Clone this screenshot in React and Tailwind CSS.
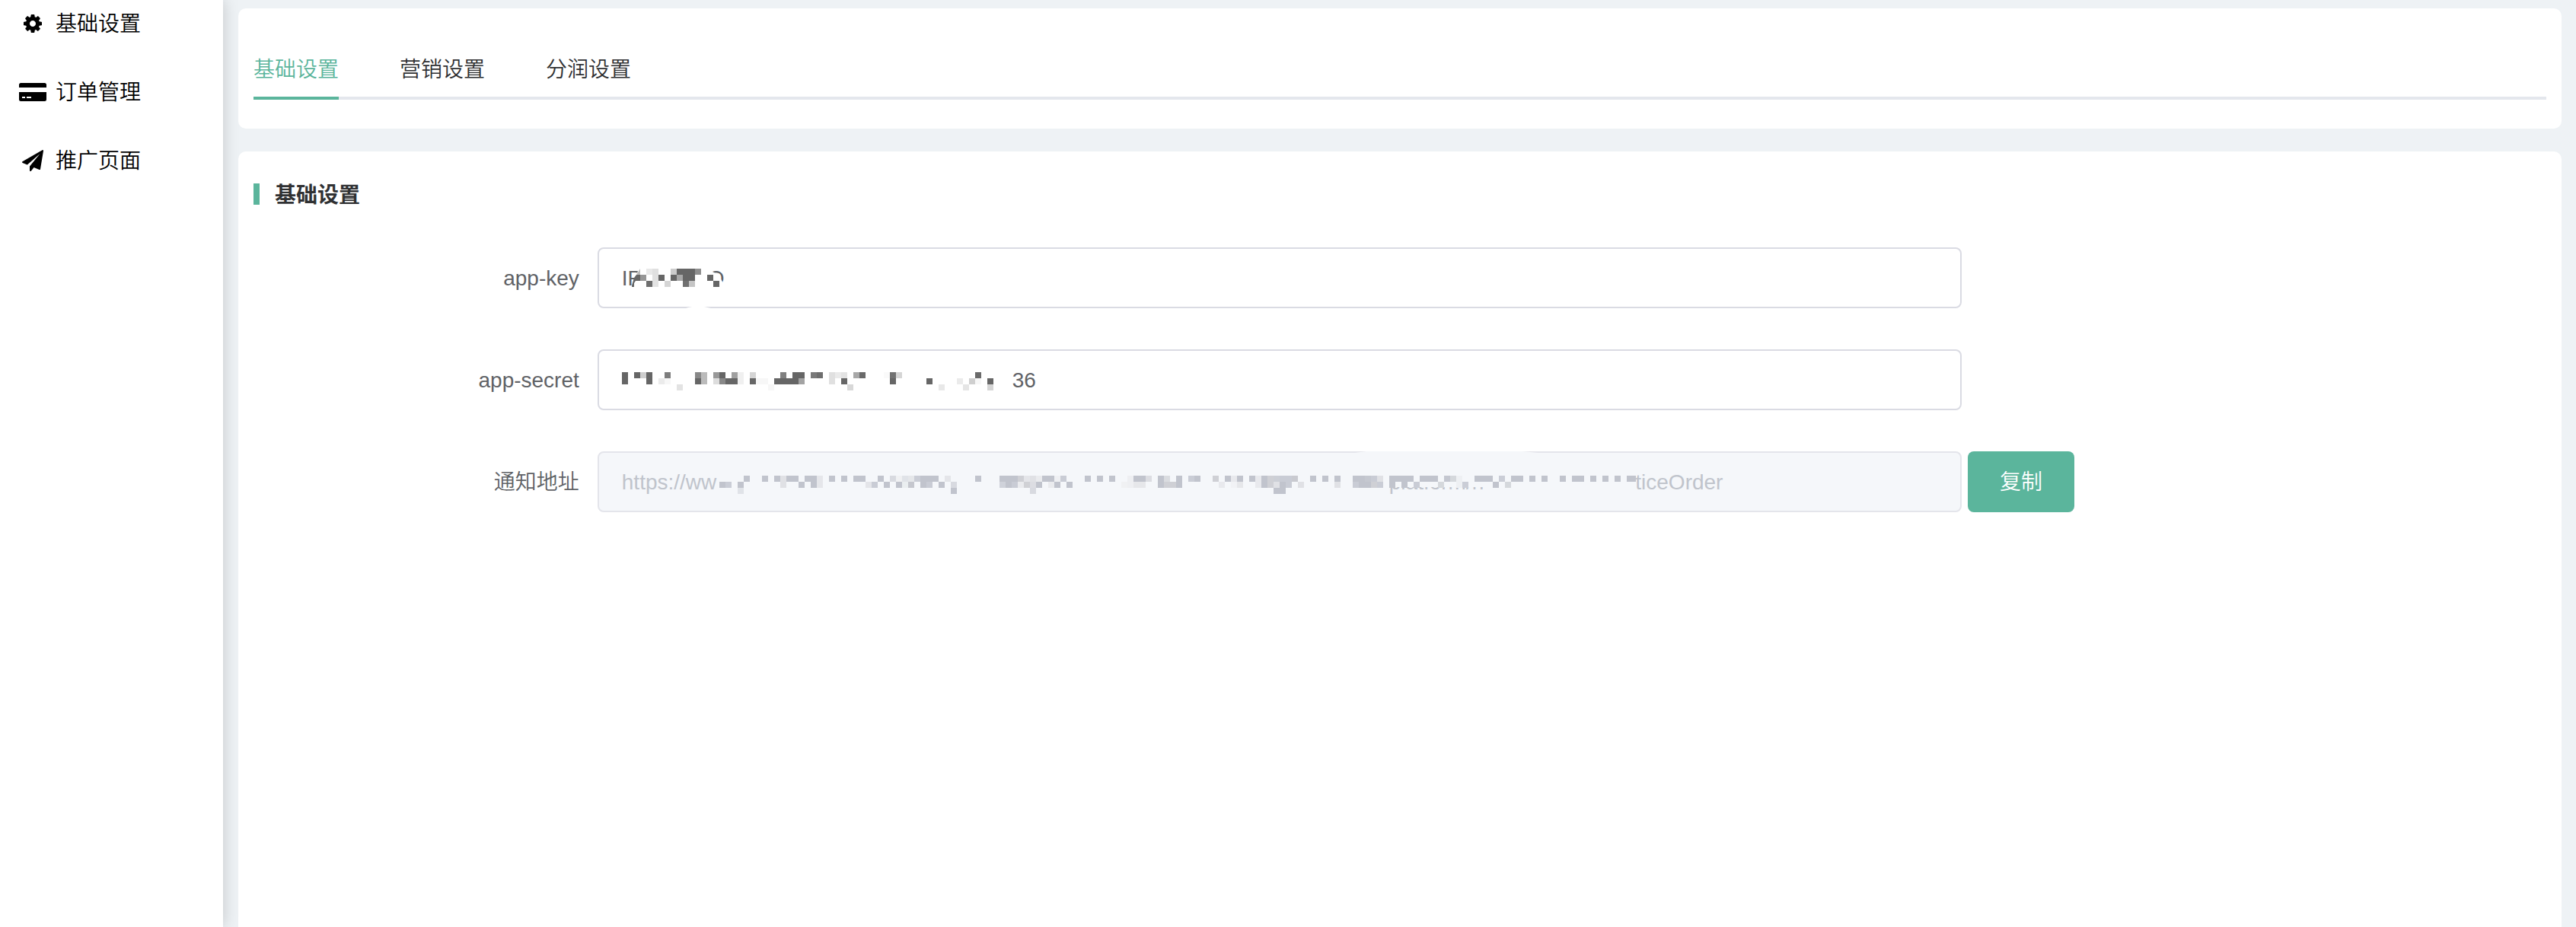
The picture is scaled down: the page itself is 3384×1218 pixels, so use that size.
import { useState } from "react";

const CELL = 8;

const KEY_ROWS = [
  "4:e8e8e8 5:e0e0e0 8:cccccc 9:666666 10:666666 11:666666 12:8f8f8f",
  "3:969696 5:e0e0e0 6:666666 8:666666 9:a8a8a8 10:666666 11:666666 14:666666",
  "4:6e6e6e 5:e3e3e3 7:d5d5d5 10:707070 11:c5c5c5 15:666666",
];

const SECRET_ROWS = [
  "0:666666 2:666666 3:cecece 4:666666 7:7d7d7d 12:888888 13:bbbbbb 15:999999 16:666666 18:a0a0a0 19:f0f0f0 21:d5d5d5 26:808080 28:666666 29:666666 31:7a7a7a 32:6e6e6e 34:e0e0e0 35:eaeaea 36:e3e3e3 38:a8a8a8 39:6a6a6a 43:fafafa 44:727272 45:d5d5d5 58:6a6a6a",
  "0:666666 4:666666 6:ebebeb 7:f7f7f7 12:666666 13:bbbbbb 15:dddddd 16:888888 17:666666 18:666666 19:f0f0f0 21:666666 22:f7f7f7 23:f7f7f7 25:666666 26:666666 27:666666 28:666666 29:a3a3a3 34:e0e0e0 36:666666 44:666666 50:666666 55:ebebeb 57:cfcfcf 58:f7f7f7 60:666666",
  "9:e3e3e3 24:f7f7f7 37:d8d8d8 52:e8e8e8 56:e5e5e5 60:d5d5d5",
];

const URL_ROWS = [
  "4:c1c4cd 7:c1c4cd 9:c1c4cd 10:e0e1e5 11:c1c4cd 12:c1c4cd 14:c1c4cd 15:c1c4cd 16:e5e6ea 18:c1c4cd 20:c1c4cd 22:c1c4cd 23:c1c4cd 26:c1c4cd 28:d8dae0 29:f0f1f3 30:e0e3e8 31:e5e7ea 32:cacdd6 33:c1c4cd 34:c1c4cd 35:c1c4cd 37:e4e5e9 42:c1c4cd 46:c1c4cd 47:c1c4cd 48:c1c4cd 49:cfd0d5 50:e4e5e9 51:e0e1e5 52:eaebee 53:c1c4cd 54:c1c4cd 55:eff0f3 56:c9ccd5 60:c1c4cd 62:c1c4cd 64:c1c4cd 67:eeeff2 68:c1c4cd 69:c1c4cd 70:dcdde2 72:c1c4cd 73:dadce0 75:c1c4cd 77:cacdd6 78:c1c4cd 81:cfd0d5 83:c1c4cd 84:e8e9ed 85:c1c4cd 87:c1c4cd 88:e8e9ed 89:c1c4cd 90:cfd0d5 91:cccfd6 92:c9ccd5 93:c9ccd5 94:c9cad0 97:c1c4cd 99:c1c4cd 101:c1c4cd 104:c1c4cd 105:c1c4cd 106:c5c8d0 107:c9ccd5 108:e0e1e5 110:c1c4cd 111:c1c4cd 112:c1c4cd 113:c1c4cd 115:c1c4cd 116:c1c4cd 117:c1c4cd 119:c4c7d0 120:d5d8dc 121:eef0f3 124:c1c4cd 125:c1c4cd 126:c1c4cd 128:cacdd6 130:c1c4cd 131:c1c4cd 133:c1c4cd 135:c1c4cd 138:c1c4cd 140:c1c4cd 141:c1c4cd 143:c1c4cd 145:c1c4cd 147:c1c4cd 149:c1c4cd",
  "0:c1c4cd 1:cacdd6 3:c1c4cd 10:e0e1e5 13:c1c4cd 15:c1c4cd 16:e5e6ea 24:e4e5e9 25:c9ccd5 27:c1c4cd 29:c1c4cd 30:eaeef0 31:c5c7ce 33:c1c4cd 34:c9ccd5 36:c1c4cd 38:d8dae0 46:cfd2da 47:c1c4cd 48:c9ccd5 49:eaebee 50:d0d1d5 51:dcdde2 52:c1c4cd 54:eaebee 55:c1c4cd 57:c1c4cd 66:f0f1f3 67:eeeff2 68:e6e7ea 69:e6e7ea 72:c1c4cd 73:cfd0d5 74:cfd0d5 75:c1c4cd 82:e8e9ed 84:f1f2f5 85:e6e7ea 88:e8e9ed 89:c1c4cd 90:cfd0d5 91:e0e1e5 92:c1c4cd 93:c9ccd5 95:e0e1e5 101:e0e1e5 104:c9ccd5 105:c1c4cd 106:c1c4cd 107:cfd0d5 108:cacdd6 110:c1c4cd 112:c1c4cd 114:c9ccd5 118:d5d8dc 121:eef0f3 122:cacdd6 127:c1c4cd 129:d5d8dc",
  "3:e0e3e8 38:c1c4cd 51:d8dae0 91:c1c4cd 92:c1c4cd",
];

function Mosaic({ rows }) {
  return rows.flatMap((row, y) =>
    row.split(" ").map((cell) => {
      const [x, color] = cell.split(":");
      return (
        <rect key={y + "-" + x} x={Number(x) * CELL} y={y * CELL} width={CELL} height={CELL} fill={"#" + color} />
      );
    })
  );
}

function CogIcon() {
  return (
    <svg viewBox="0 0 1792 1792" className="size-7" fill="currentColor" aria-hidden="true">
      <path d="M1152 896q0-106-75-181t-181-75-181 75-75 181 75 181 181 75 181-75 75-181zm512-109v222q0 12-8 23t-20 13l-185 28q-19 54-39 91 35 50 107 138 10 12 10 25t-9 23q-27 37-99 108t-94 71q-12 0-26-9l-138-108q-44 23-91 38-16 136-29 186-7 28-36 28h-222q-14 0-24.5-8.5t-11.5-21.5l-28-184q-49-16-90-37l-141 107q-10 9-25 9-14 0-25-11-126-114-165-168-7-10-7-23 0-12 8-23 15-21 51-66.5t54-70.5q-27-50-41-99l-183-27q-13-2-21-12.5t-8-23.5v-222q0-12 8-23t19-13l186-28q14-46 39-92-40-57-107-138-10-12-10-24 0-10 9-23 26-36 98.5-107.5t94.5-71.5q13 0 26 10l138 107q44-23 91-38 16-136 29-186 7-28 36-28h222q14 0 24.5 8.5t11.5 21.5l28 184q49 16 90 37l142-107q9-9 24-9 13 0 25 10 129 119 165 170 7 8 7 22 0 12-8 23-15 21-51 66.5t-54 70.5q26 50 41 98l183 28q13 2 21 12.5t8 23.5z" />
    </svg>
  );
}

function CardIcon() {
  return (
    <svg viewBox="0 0 36 24" className="h-6 w-9" aria-hidden="true">
      <path fill="currentColor" d="M2.5 0h31A2.5 2.5 0 0 1 36 2.5V6H0V2.5A2.5 2.5 0 0 1 2.5 0z" />
      <path
        fill="currentColor"
        fillRule="evenodd"
        d="M0 12h36v9.5a2.5 2.5 0 0 1-2.5 2.5h-31A2.5 2.5 0 0 1 0 21.5zM4 18v2h4v-2zM10 18v2h6v-2z"
      />
    </svg>
  );
}

function PlaneIcon() {
  return (
    <svg viewBox="0 0 1792 1792" className="size-7" fill="currentColor" aria-hidden="true">
      <path d="M1764 11q33 24 27 64l-256 1536q-5 29-32 45-14 8-31 8-11 0-24-5l-453-185-242 295q-18 23-49 23-13 0-22-4-19-7-30.5-23.5t-11.5-36.5v-349l864-1059-1069 925-395-162q-37-14-40-55-2-40 32-59l1664-960q15-9 32-9 20 0 36 11z" />
    </svg>
  );
}

const MENU = [
  { label: "基础设置", Icon: CogIcon },
  { label: "订单管理", Icon: CardIcon },
  { label: "推广页面", Icon: PlaneIcon },
];

const TABS = ["基础设置", "营销设置", "分润设置"];

function Field({ id, label, value, disabled, cover, action }) {
  return (
    <div className="flex">
      <label htmlFor={id} className="w-[15%] shrink-0 pt-0.5 pr-6 text-right leading-[78px] text-[#606266]">
        {label}
      </label>
      <div className="flex flex-1 gap-2">
        <div className="relative w-[70%]">
          <input
            id={id}
            type="text"
            defaultValue={value}
            disabled={disabled}
            className="h-20 w-full rounded-lg border-2 border-[#dadbe3] bg-white px-[30px] pt-0.5 text-[#606266] outline-none disabled:border-[#e4e5eb] disabled:bg-[#f5f7fa] disabled:text-[#c0c4cc]"
          />
          {cover}
        </div>
        {action}
      </div>
    </div>
  );
}

export default function App() {
  const [tab, setTab] = useState(0);
  return (
    <div className="flex min-h-screen bg-[#eef2f5] font-['Liberation_Sans','Noto_Sans_CJK_SC',sans-serif] text-[28px] leading-10 font-[350]">
      <aside className="z-10 w-[293px] shrink-0 bg-white shadow-[0_0_20px_rgba(0,0,0,0.18)]">
        <nav className="flex flex-col gap-[30px]">
          {MENU.map(({ label, Icon }) => (
            <a key={label} href="#" className="flex h-[60px] items-center gap-3 pt-px pl-[25px] text-black">
              <span className="flex w-9 justify-center">
                <Icon />
              </span>
              <span className="pt-0.5">{label}</span>
            </a>
          ))}
        </nav>
      </aside>

      <main className="flex min-w-0 flex-1 flex-col gap-[30px] pt-[11px] pr-[19px] pl-5">
        <section className="rounded-[10px] bg-white px-5 pt-[39px] pb-[38px]">
          <div role="tablist" className="flex gap-20 shadow-[inset_0_-4px_0_#e4e7ed]">
            {TABS.map((name, i) => (
              <button
                key={name}
                type="button"
                role="tab"
                aria-selected={tab === i}
                onClick={() => setTab(i)}
                className={
                  tab === i
                    ? "h-[81px] border-b-4 border-[#5bb59c] pt-1.5 text-[#5bb59c]"
                    : "h-[81px] border-b-4 border-transparent pt-1.5 text-[#303133]"
                }
              >
                {name}
              </button>
            ))}
          </div>
        </section>

        <section className="flex-1 rounded-t-[10px] bg-white px-5 pt-[34px]">
          <h2 className="flex items-center gap-5 font-bold text-[#303133]">
            <span className="h-7 w-2 bg-[#5bb59c]" />
            <span className="pt-1">{TABS[tab]}</span>
          </h2>
          <form className="mt-12 flex flex-col gap-[54px]" onSubmit={(e) => e.preventDefault()}>
            <Field
              id="app-key"
              label="app-key"
              value="IP"
              cover={
                <div className="pointer-events-none absolute inset-0 pt-[21px] pl-[145px] text-[#606266]">
                  Q
                  <svg className="absolute top-0 left-8 h-20 w-40" viewBox="0 -28 160 80" aria-hidden="true">
                    <path fill="#fff" d="M24 -4L19 8L13 22V28H32V-4zM108-4H117L119 4L127 8L133 19V28H108z" />
                    <path fill="#bbb" d="M24 0V8H19z" />
                    <path fill="#666" d="M24 8H19L16 12L13 22V24H16V19L18 16H24z" />
                    <Mosaic rows={KEY_ROWS} />
                    <path fill="#fff" d="M84 52Q90 50 100 49Q110 50 117 52z" />
                  </svg>
                </div>
              }
            />
            <Field
              id="app-secret"
              label="app-secret"
              value=""
              cover={
                <div className="pointer-events-none absolute inset-0 pt-[21px] pl-[545px] text-[#606266]">
                  36
                  <svg className="absolute top-[30px] left-8 h-6 w-[520px]" viewBox="0 0 520 24" aria-hidden="true">
                    <Mosaic rows={SECRET_ROWS} />
                  </svg>
                </div>
              }
            />
            <Field
              id="notify-url"
              label="通知地址"
              value="https://ww"
              disabled
              cover={
                <div className="pointer-events-none absolute inset-0 flex gap-[199px] pt-[21px] pl-[1040px] text-[#c0c4cc]">
                  <span>platform/n</span>
                  <span>ticeOrder</span>
                  <svg className="absolute top-0 left-40 h-20 w-[1216px]" viewBox="0 -32 1216 80" aria-hidden="true">
                    <path fill="#f5f7fa" d="M876-10H1030V15H876zM850-32L835-30H1075L1055-32z" />
                    <path fill="#d5d8df" d="M-4 0h4v8h-4z" />
                    <path fill="#c1c4cd" d="M1200 0h4v8h-4z" />
                    <Mosaic rows={URL_ROWS} />
                  </svg>
                </div>
              }
              action={
                <button type="button" className="h-20 w-[140px] rounded-lg bg-[#5bb59c] pt-0.5 text-white">
                  复制
                </button>
              }
            />
          </form>
        </section>
      </main>
    </div>
  );
}
